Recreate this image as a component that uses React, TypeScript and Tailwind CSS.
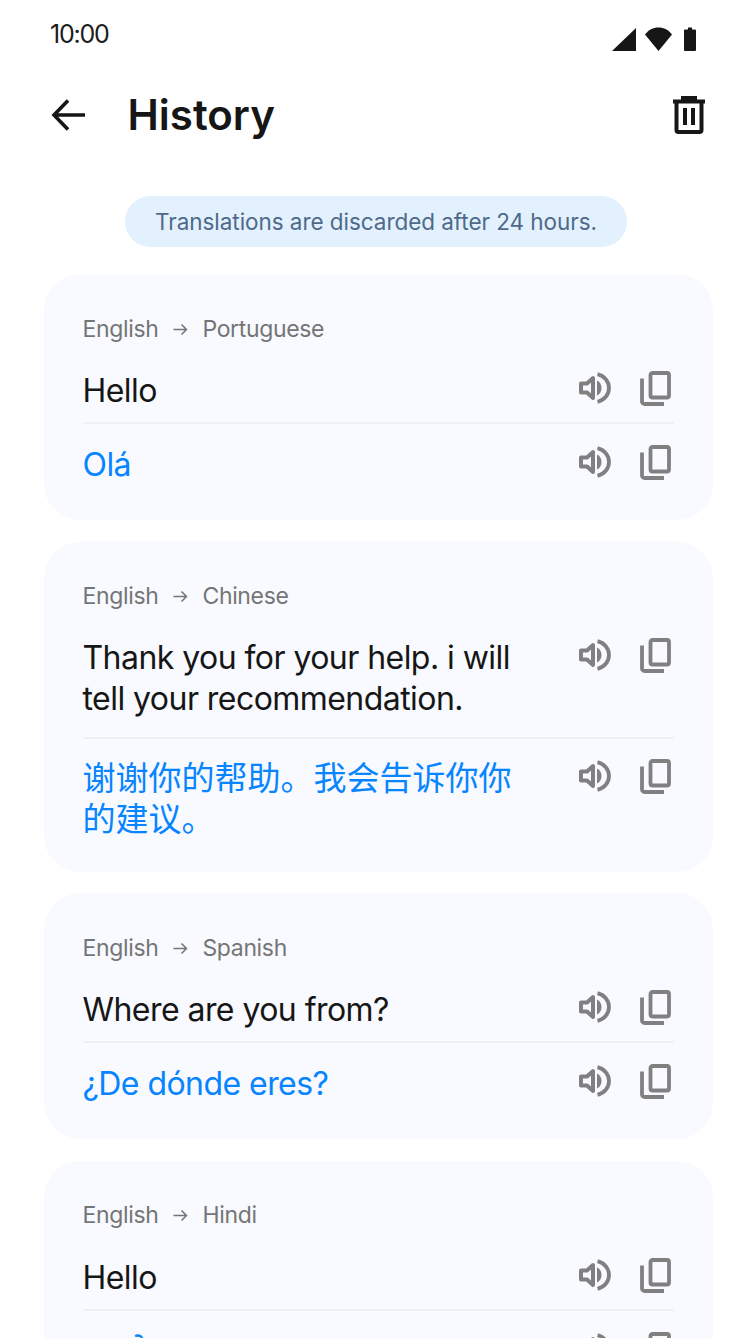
const sans = "font-['Inter','Noto_Sans_CJK_SC',sans-serif]";

function Speaker() {
  return (
    <svg width="34" height="34" viewBox="0 0 34 34" fill="none" className="text-[#808080]">
      <path d="M3 12.500h6l6-5.500v20l-6-5.500H3z" stroke="currentColor" strokeWidth="4" strokeLinejoin="round" />
      <path d="M19 9.500c3 1.400 4.500 4.200 4.500 7.500s-1.500 6.100-4.500 7.500z" fill="currentColor" />
      <path d="M19.500 3.200c6.800 1.700 11.500 7 11.500 13.800s-4.700 12.100-11.500 13.800" stroke="currentColor" strokeWidth="3.800" />
    </svg>
  );
}

function Copy() {
  return (
    <svg width="32" height="36" viewBox="0 0 32 36" fill="none" className="text-[#808080]">
      <rect x="11.500" y="3" width="18.500" height="24.500" rx="2" stroke="currentColor" strokeWidth="3.800" />
      <path d="M3 8.500v23a2.500 2.500 0 0 0 2.500 2.500H25" stroke="currentColor" strokeWidth="3.800" />
    </svg>
  );
}

function Row({ text, blue, className, textClass }: { text: string; blue?: boolean; className: string; textClass?: string }) {
  return (
    <div className={`flex items-start justify-between ${className}`}>
      <div
        className={`w-[446px] -ml-[0.5px] leading-[41px] ${textClass ?? "text-[32px] tracking-[-0.55px]"} ${
          blue ? "text-[#0784ff]" : "text-[#161616]"
        }`}
      >
        {text}
      </div>
      <div className="mr-[3px] flex items-center gap-[27px]">
        <Speaker />
        <Copy />
      </div>
    </div>
  );
}

const cards = [
  { to: "Portuguese", source: "Hello", target: "Olá", sourceClass: "mt-[26px] pb-[11px]", targetClass: "pt-[20px] pb-[35px]" },
  {
    to: "Chinese",
    source: "Thank you for your help. i will tell your recommendation.",
    target: "谢谢你的帮助。我会告诉你你的建议。",
    sourceClass: "mt-[25px] pb-[18px]",
    targetClass: "pt-[19px] pb-[32px]",
    targetText: "text-[33px] tracking-normal",
  },
  { to: "Spanish", source: "Where are you from?", target: "¿De dónde eres?", sourceClass: "mt-[26px] pb-[11px]", targetClass: "pt-[20px] pb-[35px]" },
  { to: "Hindi", source: "Hello", target: "नमस्ते", sourceClass: "mt-[26px] pb-[11px]", targetClass: "pt-[20px] pb-[35px]" },
];

export default function App() {
  return (
    <div className={`h-[1338px] w-[752px] overflow-hidden bg-white ${sans}`}>
      <div className="flex items-start justify-between pl-[50px] pr-[56px] pt-[18px]">
        <span className="text-[25px] leading-[32px] tracking-[-1.2px] text-[#1c1c1c]">10:00</span>
        <div className="mt-[9px] flex items-center text-[#161616]">
          <svg width="24" height="24" viewBox="0 0 24 24" fill="currentColor"><path d="M24 1v23H0z" /></svg>
          <svg className="ml-[9px]" width="27" height="24" viewBox="0 0 27 24" fill="currentColor">
            <path d="M13.500 24 0 7.500C3.500 3 8 0.500 13.500 0.500S23.500 3 27 7.500z" />
          </svg>
          <svg className="ml-[12px]" width="12" height="24" viewBox="0 0 12 24" fill="currentColor">
            <path d="M3.500 2.500H4V0.500h4v2h.5H11a1 1 0 0 1 1 1V23a1 1 0 0 1-1 1H1a1 1 0 0 1-1-1V3.500a1 1 0 0 1 1-1z" />
          </svg>
        </div>
      </div>

      <div className="mt-[36px] flex items-center pl-[50px] pr-[46px]">
        <svg width="36" height="36" viewBox="0 0 36 36" fill="none" stroke="#161616" strokeWidth="3.600">
          <path d="M35 18H5M18 3.500 4 18l14 14.500" />
        </svg>
        <h1 className="ml-[41.500px] text-[42px] font-semibold leading-[56px] tracking-normal text-[#161616]">History</h1>
        <svg className="ml-auto" width="34" height="38" viewBox="0 0 34 38" fill="none" stroke="#161616" strokeWidth="4">
          <path d="M1 5.500h32M11 4V2h12v2" />
          <path d="M4.500 6v28a2 2 0 0 0 2 2h21a2 2 0 0 0 2-2V6" />
          <path d="M13 12v17M21 12v17" />
        </svg>
      </div>

      <div className="mt-[53px] flex justify-center">
        <div className="flex h-[51px] w-[502px] items-center justify-center rounded-full bg-[#e3f0fd] text-[22.500px] tracking-[-0.05px] text-[#4e6a8a]">
          Translations are discarded after 24 hours.
        </div>
      </div>

      <div className="mt-[27px] flex flex-col gap-[21.500px] pl-[44px] pr-[39px]">
        {cards.map((card) => (
          <div key={card.to} className="rounded-[36px] bg-[#f8faff] pl-[39px] pr-[39px] pt-[40px]">
            <div className="-ml-[0.5px] flex h-[30px] items-center text-[23px] tracking-[-0.35px] text-[#757575]">
              <span>English</span>
              <svg className="ml-[14px] mr-[13px]" width="17" height="17" viewBox="0 0 17 17" fill="none" stroke="#757575" strokeWidth="1.500">
                <path d="M1.500 8.500h13M9.500 3.500l5 5-5 5" />
              </svg>
              <span>{card.to}</span>
            </div>
            <Row text={card.source} className={`border-b-2 border-[#eef0f5] ${card.sourceClass}`} />
            <Row text={card.target} blue textClass={card.targetText} className={card.targetClass} />
          </div>
        ))}
      </div>
    </div>
  );
}
